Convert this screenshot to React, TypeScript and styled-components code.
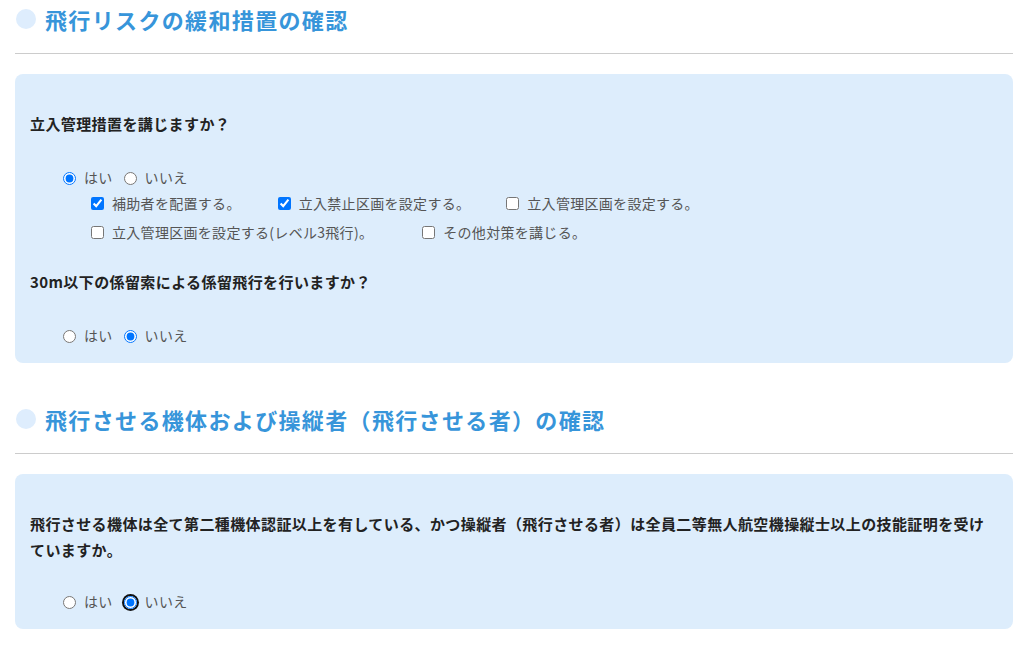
import React from "react";
import styled, { createGlobalStyle } from "styled-components";

const Global = createGlobalStyle`
  html, body { margin: 0; padding: 0; background: #fff; }
  body { font-family: "Noto Sans CJK JP", "Noto Sans", sans-serif; }
`;

const Page = styled.div`
  padding: 0 11px 0 15px;
`;

const Section = styled.section`
  & + & { margin-top: 37px; }
`;

const Heading = styled.h2`
  display: flex;
  align-items: center;
  margin: 0;
  height: 38px;
  padding-bottom: 15px;
  border-bottom: 1px solid #cccccc;
  font-size: 22px;
  font-weight: 700;
  letter-spacing: 1.35px;
  color: #3795da;
`;

const Dot = styled.span`
  width: 20px;
  height: 20px;
  border-radius: 50%;
  background: #deedfd;
  margin: 0 9px 0 1px;
  flex: none;
`;

const Panel = styled.div`
  margin-top: 20px;
  background: #ddedfc;
  border-radius: 8px;
  padding: 37px 15px 15px;
`;

const Question = styled.p<{ $gap?: number }>`
  margin: ${(p) => p.$gap ?? 0}px 0 0;
  font-size: 15px;
  line-height: 26px;
  font-weight: 700;
  letter-spacing: 0.4px;
  color: #222;
`;

const RadioRow = styled.div<{ $gap?: number }>`
  display: flex;
  align-items: center;
  height: 26px;
  margin-top: ${(p) => p.$gap ?? 27}px;
  padding-left: 28px;
`;

const CheckRow = styled.div<{ $gap?: number }>`
  display: flex;
  align-items: center;
  height: 26px;
  margin-top: ${(p) => p.$gap ?? 0}px;
  padding-left: 57px;
`;

const Choice = styled.label<{ $gap?: number }>`
  display: inline-flex;
  align-items: center;
  font-size: 14px;
  letter-spacing: 0.3px;
  color: #555;
  margin-right: ${(p) => p.$gap ?? 6}px;
`;

const Radio = styled.input.attrs({ type: "radio" })`
  width: 13px;
  height: 13px;
  margin: 2px 8px 0 5px;
  accent-color: #0075ff;
`;

const FocusRing = styled.span`
  display: inline-flex;
  border-radius: 50%;
  box-shadow: 0 0 0 2px #111;
  margin: 2px 8px 0 5px;

  & > input {
    margin: 0;
  }
`;

const Check = styled.input.attrs({ type: "checkbox" })`
  width: 13px;
  height: 13px;
  margin: 1px 8px 0 4px;
  accent-color: #0075ff;
`;

const Text = styled.span``;

function YesNo({
  name,
  yes,
  focus,
  gap,
}: {
  name: string;
  yes: boolean;
  focus?: boolean;
  gap?: number;
}) {
  const no = <Radio name={name} defaultChecked={!yes} />;
  return (
    <RadioRow $gap={gap}>
      <Choice>
        <Radio name={name} defaultChecked={yes} />
        <Text>はい</Text>
      </Choice>
      <Choice>
        {focus ? <FocusRing>{no}</FocusRing> : no}
        <Text>いいえ</Text>
      </Choice>
    </RadioRow>
  );
}

export default function App() {
  return (
    <Page>
      <Global />
      <Section>
        <Heading>
          <Dot />
          飛行リスクの緩和措置の確認
        </Heading>
        <Panel>
          <Question>立入管理措置を講じますか？</Question>
          <YesNo name="q1" yes />
          <CheckRow>
            <Choice $gap={33}>
              <Check defaultChecked />
              <Text>補助者を配置する。</Text>
            </Choice>
            <Choice $gap={32}>
              <Check defaultChecked />
              <Text>立入禁止区画を設定する。</Text>
            </Choice>
            <Choice>
              <Check />
              <Text>立入管理区画を設定する。</Text>
            </Choice>
          </CheckRow>
          <CheckRow $gap={3}>
            <Choice $gap={45}>
              <Check />
              <Text>立入管理区画を設定する(レベル3飛行)。</Text>
            </Choice>
            <Choice>
              <Check />
              <Text>その他対策を講じる。</Text>
            </Choice>
          </CheckRow>
          <Question $gap={24}>30m以下の係留索による係留飛行を行いますか？</Question>
          <YesNo name="q2" yes={false} />
        </Panel>
      </Section>
      <Section>
        <Heading>
          <Dot />
          飛行させる機体および操縦者（飛行させる者）の確認
        </Heading>
        <Panel>
          <Question>
            飛行させる機体は全て第二種機体認証以上を有している、かつ操縦者（飛行させる者）は全員二等無人航空機操縦士以上の技能証明を受けていますか。
          </Question>
          <YesNo name="q3" yes={false} focus gap={25} />
        </Panel>
      </Section>
    </Page>
  );
}
